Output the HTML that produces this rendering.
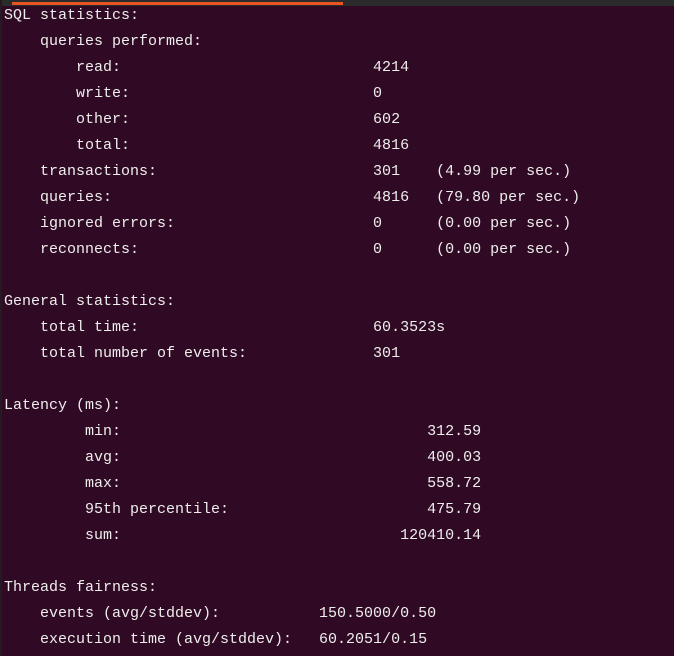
<!DOCTYPE html>
<html><head><meta charset="utf-8"><style>
html,body{margin:0;padding:0;}
body{width:674px;height:656px;background:#300a24;position:relative;overflow:hidden;}
.top{position:absolute;left:0;top:0;width:674px;height:6px;background:#2b2b2b;}
.bar{position:absolute;left:12px;top:2px;width:331px;height:3px;background:#e95420;}
.edge{position:absolute;left:0;top:0;width:2px;height:656px;background:#241a22;}
pre{position:absolute;left:4px;top:3px;margin:0;font-family:"Liberation Mono",monospace;font-size:15px;line-height:26px;color:#eeeeec;letter-spacing:0px;}
</style></head><body>
<div class="top"></div><div class="bar"></div><div class="edge"></div>
<pre>SQL statistics:
    queries performed:
        read:                            4214
        write:                           0
        other:                           602
        total:                           4816
    transactions:                        301    (4.99 per sec.)
    queries:                             4816   (79.80 per sec.)
    ignored errors:                      0      (0.00 per sec.)
    reconnects:                          0      (0.00 per sec.)

General statistics:
    total time:                          60.3523s
    total number of events:              301

Latency (ms):
         min:                                  312.59
         avg:                                  400.03
         max:                                  558.72
         95th percentile:                      475.79
         sum:                               120410.14

Threads fairness:
    events (avg/stddev):           150.5000/0.50
    execution time (avg/stddev):   60.2051/0.15</pre>
</body></html>
